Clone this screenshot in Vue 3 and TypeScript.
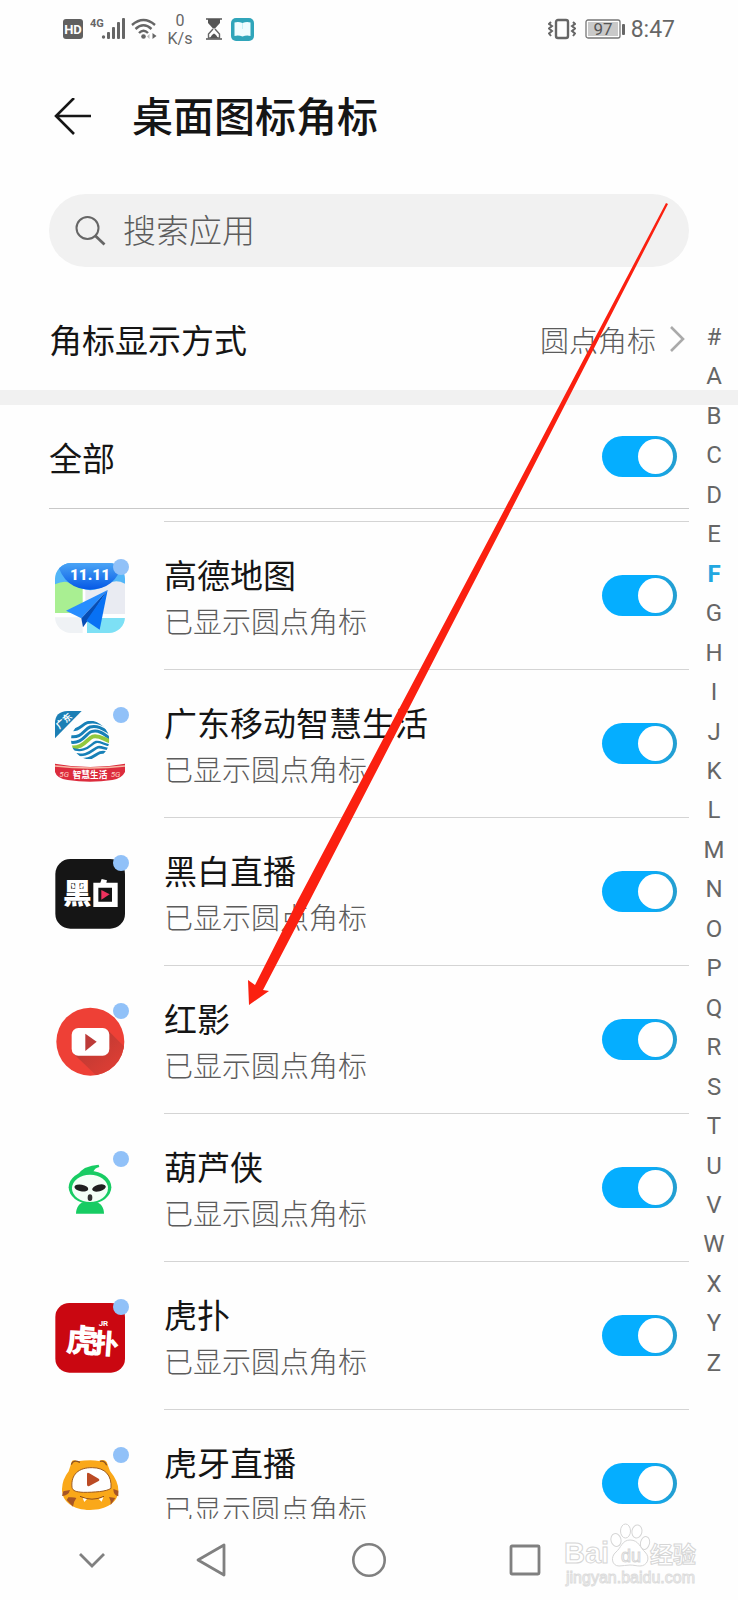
<script setup lang="ts">
import { ref } from 'vue'

interface AppItem {
  id: string
  name: string
  enabled: boolean
}

const query = ref('')
const allEnabled = ref(true)
const active = ref('F')
const letters: string[] = '#ABCDEFGHIJKLMNOPQRSTUVWXYZ'.split('')

const apps = ref<AppItem[]>([
  { id: 'amap', name: '高德地图', enabled: true },
  { id: 'mobile', name: '广东移动智慧生活', enabled: true },
  { id: 'heibai', name: '黑白直播', enabled: true },
  { id: 'hongying', name: '红影', enabled: true },
  { id: 'hulu', name: '葫芦侠', enabled: true },
  { id: 'hupu', name: '虎扑', enabled: true },
  { id: 'huya', name: '虎牙直播', enabled: true },
])
</script>

<template>
  <div class="screen">
    <div class="status">
      <div class="status-left">
        <svg width="20" height="20" viewBox="0 0 20 20">
          <rect width="20" height="20" rx="3" fill="#606060" />
          <text x="10" y="15" text-anchor="middle" class="hd">HD</text>
        </svg>
        <svg class="signal" width="36" height="24" viewBox="0 0 36 24">
          <text x="0" y="10" class="net">4G</text>
          <g fill="#666">
            <circle cx="13.500" cy="20" r="1.700" />
            <rect x="17" y="15" width="3" height="7" rx="1" />
            <rect x="22" y="10" width="3" height="12" rx="1" />
            <rect x="27" y="5" width="3" height="17" rx="1" />
            <rect x="32" y="1" width="3" height="21" rx="1" />
          </g>
        </svg>
        <svg class="wifi" width="27" height="22" viewBox="0 0 27 22">
          <g fill="none" stroke="#666" stroke-width="2.400">
            <path d="M1 7Q12.500-3 24 7" />
            <path d="M4.500 11Q12.500 3.500 20.500 11" />
            <path d="M8 15Q12.500 10.500 17 15" />
          </g>
          <circle cx="12.500" cy="18.500" r="2.300" fill="#666" />
          <path d="M18.500 16v5l-2.500-2.500z" fill="#bbb" />
          <path d="M21.500 15v6l4-3z" fill="#666" />
        </svg>
        <div class="speed"><span>0</span><span>K/s</span></div>
        <svg width="16" height="22" viewBox="0 0 16 22">
          <path d="M0 1h16M0 21h16" stroke="#555" stroke-width="1.600" />
          <path d="M2 1h12v4l-5 5.500h-2L2 5z" fill="#555" />
          <path d="M7 11L2.500 16v4h11v-4L9 11" fill="none" stroke="#666" stroke-width="1.400" />
          <path d="M4 20l2-3 2-1.500 2 1.500 2 3z" fill="#555" />
        </svg>
        <svg class="book" width="23" height="23" viewBox="0 0 23 23">
          <rect width="23" height="23" rx="5" fill="#30a5ba" />
          <path d="M3.500 4.500q4-1 8 .5 4-1.500 8-.5v13.500q-4-1-8 .5-4-1.500-8-.5z" fill="#f0fdff" />
          <path d="M11.500 5v6" stroke="#c8f0f5" />
        </svg>
      </div>
      <div class="status-right">
        <svg width="28" height="22" viewBox="0 0 28 22">
          <g fill="none" stroke="#666">
            <rect x="8" y="2" width="12" height="18" rx="2" stroke-width="2.400" />
            <path d="M3 4l-2 2 3 2-3 2.500 3 2.500-3 2.500 2 2.500M25 4l2 2-3 2 3 2.500-3 2.500 3 2.500-2 2.500" stroke-width="2" />
          </g>
        </svg>
        <svg class="battery" width="40" height="20" viewBox="0 0 40 20">
          <rect x="1" y="1" width="34" height="18" rx="2" fill="#fff" stroke="#777" stroke-width="1.300" />
          <rect x="3" y="3" width="30" height="14" fill="#c9c9c9" />
          <rect x="37" y="5" width="3" height="11" rx="1" fill="#666" />
          <text x="18" y="16" text-anchor="middle" class="level">97</text>
        </svg>
        <span class="clock">8:47</span>
      </div>
    </div>

    <header class="header">
      <button class="back" type="button" aria-label="返回">
        <svg width="38" height="38" viewBox="0 0 38 38">
          <path d="M37 18H2M20 0L2 18l18 18" fill="none" stroke="#161616" stroke-width="2.600" />
        </svg>
      </button>
      <h1>桌面图标角标</h1>
    </header>

    <label class="search">
      <svg width="32" height="32" viewBox="0 0 32 32">
        <circle cx="12.500" cy="13" r="11" fill="none" stroke="#666" stroke-width="2" />
        <path d="M20 20.500l9.500 9" stroke="#666" stroke-width="2.800" />
      </svg>
      <input v-model="query" type="text" placeholder="搜索应用" aria-label="搜索应用" />
    </label>

    <main class="content">
      <button class="mode" type="button">
        <span class="mode-title">角标显示方式</span>
        <span class="mode-value">圆点角标</span>
        <svg width="16" height="28" viewBox="0 0 16 28">
          <path d="M2 2l12 12L2 26" fill="none" stroke="#aaa" stroke-width="2.600" />
        </svg>
      </button>
      <div class="band"></div>
      <div class="all">
        <label for="all-switch">全部</label>
        <input id="all-switch" v-model="allEnabled" class="switch" type="checkbox" />
      </div>

      <ul class="list">
        <li v-for="app in apps" :key="app.id" class="row">
          <svg class="icon" width="80" height="80" viewBox="0 0 80 80">
            <g v-if="app.id === 'amap'" transform="translate(-9 -9) scale(.33333)">
              <defs>
                <clipPath id="map-clip"><rect x="45" y="51" width="210" height="210" rx="48" /></clipPath>
                <linearGradient id="map-blue" x2="0" y2="1">
                  <stop offset="0" stop-color="#4aa4f5" /><stop offset="1" stop-color="#0558e6" />
                </linearGradient>
              </defs>
              <g clip-path="url(#map-clip)">
                <rect x="45" y="51" width="210" height="210" fill="#fff" />
                <path d="M45 95h83v106H45z" fill="#a9ef92" />
                <path d="M136 95h119v109H136z" fill="#e9ebf2" />
                <path d="M141 216h114v45H141z" fill="#7de0f5" />
                <path d="M45 214h83v47H45z" fill="#eff2f5" />
                <path d="M45 51h210v62q-30-15-52 2-52 35-104 0-22-16-54 0z" fill="#52b6f8" />
                <path d="M52 51h196q-20 78-98 80-78-2-98-80z" fill="url(#map-blue)" />
              </g>
              <path d="M203 132L78 194l46 23z" fill="#278dff" />
              <path d="M203 132l-79 85 5 27 14-20z" fill="#064eb5" />
              <path d="M203 132l-64 92 40 27z" fill="#0871f4" />
              <text x="150" y="103" text-anchor="middle" class="eleven">11.11</text>
            </g>
            <g v-else-if="app.id === 'mobile'" transform="translate(-9 -157) scale(.33333)">
              <defs>
                <clipPath id="swirl-clip">
                  <path d="M150 524q20 0 38 16 20 18 20 42 0 28-24 48-12 10-34 10t-38-16q-19-18-19-42 0-26 21-44 16-14 36-14z" />
                </clipPath>
              </defs>
              <path d="M45 577v-45q0-36 38-37h42z" fill="#1c7fb5" />
              <text transform="translate(58 550) rotate(-42)" class="province">广东</text>
              <g clip-path="url(#swirl-clip)" fill="none" stroke="#1780b7" stroke-width="9">
                <path d="M88 550c30 6 36-14 54-20 24-6 42 2 66 16" />
                <path d="M88 571c38 8 44-22 62-28 20-6 38 4 62 20" />
                <path d="M88 588c38 8 50-26 66-31 20-6 34 4 56 20" />
                <path d="M88 604c42 6 54-27 70-32 18-5 30 6 52 14" stroke="#92c83e" stroke-width="12" />
                <path d="M88 606c52 20 64-14 80-18 14-3 22 8 42 10" stroke-width="7" />
                <path d="M94 622c50 16 64-14 80-18 12-3 20 6 36 5" stroke-width="8" />
                <path d="M106 639c46 8 58-14 74-19 10-3 18 1 28-1" />
              </g>
              <path d="M45 653q106 20 210 0v25q-10 20-38 24-67 11-134 0-32-4-38-24z" fill="#dc2c3d" />
              <path d="M45 660q106 12 210 0" fill="none" stroke="#f7b9a5" stroke-width="4" />
              <text x="150" y="695" text-anchor="middle" class="ribbon">智慧生活</text>
              <text x="58" y="692" class="five">5G</text>
              <text x="212" y="692" class="five">5G</text>
            </g>
            <g v-else-if="app.id === 'heibai'" transform="translate(-9 -11) scale(.33333)">
              <rect x="46" y="57" width="209" height="209" rx="45" fill="#151515" />
              <text x="69" y="193" class="hei">黑</text>
              <path d="M181 128l4-11 16 4-2 7h34v73h-73v-73zM175 143v42h41v-42z" fill="#fff" fill-rule="evenodd" />
              <path d="M184 150l25 13-25 16z" fill="#ed315d" />
            </g>
            <g v-else-if="app.id === 'hongying'" transform="translate(-9 -159) scale(.33333)">
              <defs>
                <clipPath id="play-clip"><circle cx="151" cy="605" r="102" /></clipPath>
                <linearGradient id="play-shade" x1="0" y1="0" x2="1" y2="1">
                  <stop offset="0" stop-color="#b03832" /><stop offset=".7" stop-color="#d93d34" />
                </linearGradient>
              </defs>
              <circle cx="151" cy="605" r="102" fill="#ee4036" />
              <g clip-path="url(#play-clip)">
                <path d="M203 570l60 60v90h-80l-84-80z" fill="url(#play-shade)" />
              </g>
              <rect x="95" y="564" width="113" height="83" rx="20" fill="#fff" />
              <path d="M136 581l34 24-34 28z" fill="#bd3b39" />
            </g>
            <g v-else-if="app.id === 'hulu'" transform="translate(-9 -8) scale(.33333)">
              <path d="M108 224c0-20 12-34 26-36h32c16 3 26 17 26 36z" fill="#17cc63" />
              <ellipse cx="150" cy="145" rx="64" ry="49" fill="#17cc63" />
              <path d="M112 108q20-29 64-31l2 7q-15 4-18 14z" fill="#17cc63" />
              <ellipse cx="150" cy="148" rx="54" ry="41" fill="#f4fff7" />
              <ellipse cx="124" cy="147" rx="21" ry="10" transform="rotate(10 124 147)" fill="#202020" />
              <ellipse cx="177" cy="147" rx="21" ry="10" transform="rotate(-15 177 147)" fill="#202020" />
              <ellipse cx="150" cy="176" rx="7" ry="10" fill="#333" />
            </g>
            <g v-else-if="app.id === 'hupu'" transform="translate(-9 -156) scale(.33333)">
              <rect x="46" y="492" width="209" height="209" rx="42" fill="#ca0711" />
              <text transform="translate(76 636) rotate(4)" class="hupu tall">虎</text>
              <text transform="translate(154 641) rotate(4)" class="hupu">扑</text>
              <text x="176" y="560" class="jr">JR</text>
            </g>
            <g v-else transform="translate(-9 -15) scale(.33333)">
              <path d="M86 130l10-31q5-5 16 1 40-6 65-1 16-7 23 3l10 27q25 30 25 58c0 36-35 59-85 59s-85-25-84-63q1-29 20-53z" fill="#faa819" />
              <path d="M94 110q4-13 18-10l8 3M180 100q14-4 20 12" fill="none" stroke="#8a5020" stroke-width="4" />
              <path d="M96 178c-4-38 20-60 61-59 38 0 59 23 56 62-14 10-50 12-83 12-21-1-32-4-34-15z" fill="#fff" stroke="#9c5a22" stroke-width="3" />
              <path d="M141 139q0-7 7-3l28 16q5 4 0 7l-28 15q-7 3-7-5z" fill="#bb4b24" />
              <path d="M70 190l20-4q-4 17-24 18zM85 208q18-1 24 2-8 10-10 26l-19-20zM235 188l-15-5q0 18 15 22zM226 210l-19-3q7 12 5 24z" fill="#a65526" />
              <path d="M120 205q36 17 72 0" fill="none" stroke="#8f4e1d" stroke-width="3" />
              <path d="M128 210l5 12 8-9zM176 213l9 8 5-13z" fill="#fff" />
            </g>
            <circle cx="72" cy="12" r="8" fill="#91c1f8" />
          </svg>
          <label class="info" :for="`switch-${app.id}`">
            <span class="name">{{ app.name }}</span>
            <span class="sub">已显示圆点角标</span>
          </label>
          <input :id="`switch-${app.id}`" v-model="app.enabled" class="switch" type="checkbox" />
        </li>
      </ul>
    </main>

    <nav class="index" aria-label="字母索引">
      <button
        v-for="letter in letters"
        :key="letter"
        type="button"
        :class="{ active: letter === active }"
        @click="active = letter"
      >{{ letter }}</button>
    </nav>

    <footer class="navbar">
      <button type="button" aria-label="收起">
        <svg width="28" height="18" viewBox="0 0 28 18">
          <path d="M2 3l12 12L26 3" fill="none" stroke="#808080" stroke-width="2.800" />
        </svg>
      </button>
      <button type="button" aria-label="后退">
        <svg width="32" height="36" viewBox="0 0 32 36">
          <path d="M29 3v30L3 18z" fill="none" stroke="#808080" stroke-width="2.800" stroke-linejoin="round" />
        </svg>
      </button>
      <button type="button" aria-label="主页">
        <svg width="36" height="36" viewBox="0 0 36 36">
          <circle cx="18" cy="18" r="15.700" fill="none" stroke="#808080" stroke-width="2.600" />
        </svg>
      </button>
      <button type="button" aria-label="最近任务">
        <svg width="32" height="32" viewBox="0 0 32 32">
          <rect x="2" y="2" width="28" height="28" rx="1" fill="none" stroke="#808080" stroke-width="2.800" />
        </svg>
      </button>
    </footer>

    <svg class="watermark" width="140" height="72" viewBox="0 0 140 72">
      <g fill="#fff" stroke="#d6d6d6">
        <text x="2" y="43" class="wm-brand">Bai</text>
        <ellipse cx="54" cy="20" rx="5" ry="6.500" transform="rotate(-15 54 20)" />
        <ellipse cx="63.500" cy="11" rx="5" ry="7" />
        <ellipse cx="75" cy="11.500" rx="5" ry="6.500" transform="rotate(10 75 11)" />
        <ellipse cx="83" cy="23" rx="4.500" ry="6.500" transform="rotate(15 83 23)" />
        <path d="M68 20c9 0 10 8 15 12 6 6 2 14-5 14-4 0-6-1-10-1s-7 1-11 1c-7 0-9-9-3-14 5-4 6-12 14-12z" />
        <text x="59" y="42" class="wm-du">du</text>
        <text x="88" y="43" class="wm-cjk">经验</text>
      </g>
      <text x="4" y="63" class="wm-url">jingyan.baidu.com</text>
    </svg>

    <svg class="pointer" viewBox="0 0 738 1600" preserveAspectRatio="none">
      <path d="M666 203L499 520 298 900 255 985l-7-5 1 25 20-14-6-1 47-90L506 520 668 204z" fill="#fb2010" />
    </svg>
  </div>
</template>

<style>
body {
  margin: 0;
  background: #fefefe;
}
</style>

<style scoped>
.screen {
  position: relative;
  display: flex;
  flex-direction: column;
  height: 100vh;
  overflow: hidden;
  background: #fefefe;
  color: #151515;
  font-family: Roboto, "Noto Sans CJK SC", sans-serif;
}

button {
  padding: 0;
  border: 0;
  background: none;
  color: inherit;
  font: inherit;
}

svg {
  display: block;
  flex: none;
}

.status {
  display: flex;
  flex: none;
  justify-content: space-between;
  height: 58px;
  padding: 0 63px;
  color: #666;
}

.status-left,
.status-right {
  display: flex;
  align-items: center;
}

.signal {
  margin-left: 7px;
}

.wifi {
  margin-left: 5px;
}

.speed {
  display: flex;
  flex-direction: column;
  align-items: center;
  width: 28px;
  margin: 2px 12px 0 8px;
  font-size: 16px;
  line-height: 18px;
}

.book {
  margin-left: 9px;
}

.battery {
  margin: 0 6px 0 9px;
}

.clock {
  font-size: 23px;
}

.hd {
  fill: #fff;
  font-size: 13px;
  font-weight: 700;
}

.net {
  fill: #666;
  font-size: 11px;
  font-weight: 700;
}

.level {
  fill: #555;
  font-size: 17px;
}

.header {
  display: flex;
  flex: none;
  align-items: center;
  gap: 40px;
  height: 118px;
  padding: 0 54px;
}

h1 {
  margin: 2px 0 0;
  font-size: 41px;
  font-weight: 500;
  line-height: 60px;
}

.search {
  display: flex;
  flex: none;
  align-items: center;
  gap: 16px;
  height: 73px;
  margin: 18px 49px 0;
  padding: 0 26px;
  border-radius: 37px;
  background: #f1f1f1;
}

.search input {
  flex: 1;
  min-width: 0;
  padding: 2px 0 0;
  border: 0;
  outline: 0;
  background: none;
  color: #333;
  font: inherit;
  font-size: 33px;
  font-weight: 300;
}

.search input::placeholder {
  color: #5c5c5c;
  opacity: 1;
}

.content {
  display: flex;
  flex: 1;
  flex-direction: column;
  min-height: 0;
}

.mode {
  display: flex;
  flex: none;
  align-items: center;
  height: 123px;
  padding: 20px 53px 0 49px;
}

.mode-title {
  flex: 1;
  font-size: 33px;
  text-align: left;
}

.mode-value {
  margin-right: 13px;
  color: #5c5c5c;
  font-size: 29px;
  font-weight: 300;
}

.band {
  flex: none;
  height: 15px;
  background: #f1f1f1;
}

.all {
  display: flex;
  flex: none;
  align-items: center;
  justify-content: space-between;
  box-sizing: border-box;
  height: 104px;
  margin: 0 49px;
  padding-right: 12px;
  border-bottom: 1px solid #c8c8c8;
  font-size: 33px;
}

.list {
  flex: 1;
  min-height: 0;
  margin: 0 49px;
  padding: 12px 0 0;
  overflow: hidden;
  list-style: none;
}

.row {
  position: relative;
  display: flex;
  align-items: center;
  height: 148px;
  padding-right: 12px;
}

.row::before {
  position: absolute;
  top: 0;
  right: 0;
  left: 115px;
  height: 1px;
  background: #d4d4d4;
  content: "";
}

.info {
  display: flex;
  flex: 1;
  flex-direction: column;
  margin-left: 35px;
  padding-top: 8px;
}

.name {
  font-size: 33px;
  line-height: 48px;
}

.sub {
  color: #5c5c5c;
  font-size: 29px;
  font-weight: 300;
  line-height: 44px;
}

.switch {
  position: relative;
  flex: none;
  width: 75px;
  height: 41px;
  margin: 0;
  border-radius: 21px;
  background: #c8c8c8;
  appearance: none;
}

.switch::before {
  position: absolute;
  top: 3px;
  left: 4px;
  width: 35px;
  height: 35px;
  border-radius: 50%;
  background: #fff;
  content: "";
}

.switch:checked {
  background: linear-gradient(90deg, #05aeff 60%, #239fd2 95%);
}

.switch:checked::before {
  right: 4px;
  left: auto;
}

.index {
  position: absolute;
  top: 322px;
  right: 9px;
  bottom: 222px;
  display: flex;
  flex-direction: column;
  justify-content: space-between;
  width: 30px;
}

.index button {
  color: #666;
  font-size: 24px;
  line-height: 30px;
  text-align: center;
}

.index .active {
  color: #22a7e0;
  font-weight: 700;
}

.navbar {
  display: grid;
  flex: none;
  grid-template-columns: 184fr 54fr 262fr 50fr 188fr;
  height: 81px;
}

.navbar button {
  display: flex;
  align-items: center;
  justify-content: center;
}

.watermark {
  position: absolute;
  right: 36px;
  bottom: 8px;
}

.pointer {
  position: absolute;
  inset: 0;
  width: 100%;
  height: 100%;
  pointer-events: none;
}

.eleven {
  fill: #fff;
  font-size: 46px;
  font-weight: 900;
}

.province {
  fill: #fff;
  font-size: 27px;
  font-weight: 700;
}

.ribbon {
  fill: #fff;
  font-size: 26px;
  font-weight: 700;
}

.five {
  fill: #ffd0c4;
  font-size: 24px;
  font-style: italic;
}

.hei {
  fill: #fff;
  font-size: 86px;
  font-weight: 900;
}

.hupu {
  fill: #fff;
  font-size: 82px;
  font-weight: 900;
}

.tall {
  font-size: 96px;
}

.jr {
  fill: #fff;
  font-size: 24px;
  font-weight: 700;
}

.wm-brand {
  font-family: "Liberation Sans", sans-serif;
  font-size: 29px;
  font-weight: 700;
}

.wm-du {
  font-family: "Liberation Sans", sans-serif;
  font-size: 18px;
}

.wm-cjk {
  font-size: 23px;
  font-weight: 700;
}

.wm-url {
  fill: #fefefe;
  stroke: #dcdcdc;
  font-family: "Liberation Sans", sans-serif;
  font-size: 16px;
}
</style>
